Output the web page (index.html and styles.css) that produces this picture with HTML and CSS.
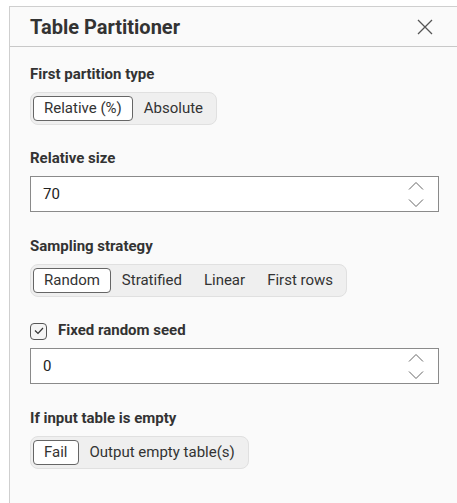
FILE: index.html
```html
<!DOCTYPE html>
<html>
<head>
<meta charset="utf-8">
<link rel="stylesheet" href="styles.css">
</head>
<body>
<div class="panel">
  <div class="header">
    <h1 class="title">Table Partitioner</h1>
    <svg class="close" width="16" height="16" viewBox="0 0 16 16"><path d="M1 1 L15 15 M15 1 L1 15" stroke="#555" stroke-width="1.3" fill="none"/></svg>
  </div>
  <div class="content">
    <div class="section">
      <div class="label">First partition type</div>
      <div class="seg">
        <span class="opt sel">Relative (%)</span>
        <span class="opt">Absolute</span>
      </div>
    </div>
    <div class="section">
      <div class="label">Relative size</div>
      <div class="input">
        <span class="val">70</span>
        <div class="spin">
          <svg width="16" height="10" viewBox="0 0 16 10"><path d="M1 8.5 L8 1.5 L15 8.5" stroke="#666" stroke-width="1" fill="none"/></svg>
          <svg width="16" height="10" viewBox="0 0 16 10"><path d="M1 1.5 L8 8.5 L15 1.5" stroke="#666" stroke-width="1" fill="none"/></svg>
        </div>
      </div>
    </div>
    <div class="section">
      <div class="label">Sampling strategy</div>
      <div class="seg">
        <span class="opt sel">Random</span>
        <span class="opt">Stratified</span>
        <span class="opt">Linear</span>
        <span class="opt">First rows</span>
      </div>
    </div>
    <div class="section">
      <div class="label check-row">
        <span class="checkbox"><svg width="10" height="8" viewBox="0 0 10 8"><path d="M1 3.5 L4 6.5 L9 1" stroke="#333" stroke-width="1.2" fill="none"/></svg></span>
        Fixed random seed
      </div>
      <div class="input">
        <span class="val">0</span>
        <div class="spin">
          <svg width="16" height="10" viewBox="0 0 16 10"><path d="M1 8.5 L8 1.5 L15 8.5" stroke="#666" stroke-width="1" fill="none"/></svg>
          <svg width="16" height="10" viewBox="0 0 16 10"><path d="M1 1.5 L8 8.5 L15 1.5" stroke="#666" stroke-width="1" fill="none"/></svg>
        </div>
      </div>
    </div>
    <div class="section">
      <div class="label">If input table is empty</div>
      <div class="seg">
        <span class="opt sel">Fail</span>
        <span class="opt">Output empty table(s)</span>
      </div>
    </div>
  </div>
</div>
</body>
</html>
```
FILE: styles.css
```css
html, body {
  margin: 0;
  padding: 0;
  background: #ffffff;
  height: 100%;
  overflow: hidden;
}
body {
  font-family: Roboto, "Liberation Sans", sans-serif;
  color: #333;
  padding-top: 6px;
  padding-left: 9px;
  box-sizing: border-box;
}
.panel {
  background: #fafafa;
  border-top: 1px solid #cfcfcf;
  border-left: 1px solid #cfcfcf;
  height: 100%;
  box-sizing: border-box;
}
.header {
  height: 39px;
  border-bottom: 1px solid #c8c8c8;
  display: flex;
  align-items: center;
  justify-content: space-between;
  padding: 0 24px 0 20px;
}
.title {
  margin: 0;
  font-size: 20px;
  font-weight: 700;
  color: #333;
  line-height: 24px;
}
.close {
  display: block;
}
.content {
  padding: 17px 18px 0 20px;
  display: flex;
  flex-direction: column;
  gap: 23px;
}
.label {
  font-size: 15px;
  font-weight: 700;
  line-height: 20px;
  margin-bottom: 8px;
  color: #333;
}
.seg {
  display: inline-flex;
  align-items: center;
  background: #efefef;
  border: 1px solid #e0e0e0;
  border-radius: 8px;
  padding: 3px 2px;
  gap: 0;
}
.opt {
  font-size: 15px;
  line-height: 23px;
  padding: 0 10px;
  border: 1px solid transparent;
  border-radius: 4px;
  color: #333;
}
.opt.sel {
  background: #fff;
  border-color: #666;
}
.input {
  height: 36px;
  box-sizing: border-box;
  border: 1px solid #8a8a8a;
  background: #fff;
  display: flex;
  align-items: center;
  justify-content: space-between;
  margin-bottom: 1px;
}
.val {
  font-size: 15px;
  padding-left: 12px;
  color: #222;
}
.spin {
  display: flex;
  flex-direction: column;
  align-items: center;
  justify-content: center;
  gap: 7px;
  width: 40px;
  height: 100%;
  background: #fff;
  padding-right: 2px;
}
.spin svg {
  display: block;
}
.check-row {
  display: flex;
  align-items: center;
  gap: 11px;
}
.checkbox {
  width: 15px;
  height: 15px;
  border: 1px solid #555;
  border-radius: 4px;
  background: #f4f4f4;
  display: flex;
  align-items: center;
  justify-content: center;
  margin-top: 2px;
}
.checkbox svg {
  display: block;
}
```
